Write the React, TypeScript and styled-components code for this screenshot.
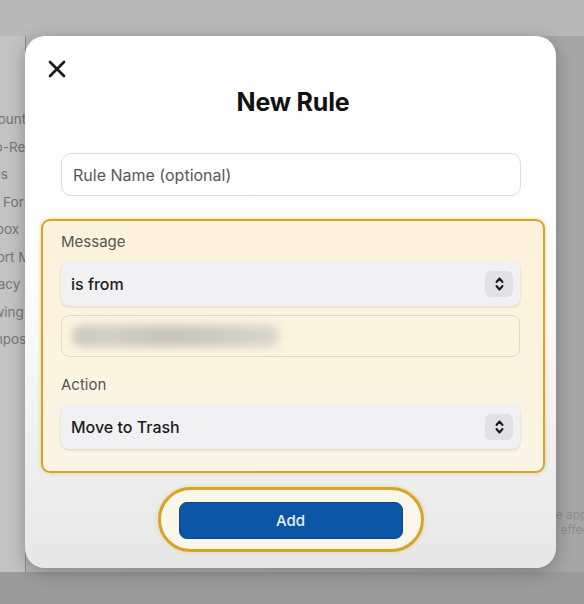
import styled, { createGlobalStyle } from 'styled-components';

const GlobalStyle = createGlobalStyle`
  html, body {
    margin: 0;
    padding: 0;
    width: 584px;
    height: 604px;
    overflow: hidden;
    font-family: Inter, "Noto Sans", "Liberation Sans", sans-serif;
  }
`;

const sidebarItems = ['Accounts', 'Auto-Reply', 'Rules', 'Mail Format', 'Outbox', 'Import Mail', 'Privacy', 'Viewing', 'Composing'];

const Chevrons = () => (
    <svg width="9" height="16" viewBox="0 0 9 16" fill="none">
        <path d="M1.5 6 L4.5 2.5 L7.5 6" stroke="#1a1a1a" strokeWidth="2" strokeLinecap="round" strokeLinejoin="round" />
        <path d="M1.5 10 L4.5 13.5 L7.5 10" stroke="#1a1a1a" strokeWidth="2" strokeLinecap="round" strokeLinejoin="round" />
    </svg>
);

const CloseIcon = () => (
    <svg width="18" height="18" viewBox="0 0 18 18" fill="none">
        <path d="M2 2 L16 16 M16 2 L2 16" stroke="#1c1c1c" strokeWidth="2.8" strokeLinecap="round" />
    </svg>
);

const App = () => {
    return (
        <Page>
            <GlobalStyle />
            <TopBar />
            <Body>
                <Sidebar>
                    <SidebarList>
                        {sidebarItems.map(item => (
                            <SidebarItem key={item}>{item}</SidebarItem>
                        ))}
                    </SidebarList>
                </Sidebar>
                <Main>
                    <Note>Rules will be applied</Note>
                    <Note>and it takes effect</Note>
                </Main>
            </Body>
            <BottomBar />

            <Modal>
                <CloseButton aria-label="Close"><CloseIcon /></CloseButton>
                <Title>New Rule</Title>
                <TextInput placeholder="Rule Name (optional)" />

                <Highlight>
                    <Label>Message</Label>
                    <Select>
                        <SelectText>is from</SelectText>
                        <ChevronBox><Chevrons /></ChevronBox>
                    </Select>
                    <Field>
                        <Blurred />
                    </Field>
                    <Label $spaced>Action</Label>
                    <Select>
                        <SelectText>Move to Trash</SelectText>
                        <ChevronBox><Chevrons /></ChevronBox>
                    </Select>
                </Highlight>

                <ButtonRing>
                    <AddButton>Add</AddButton>
                </ButtonRing>
            </Modal>
        </Page>
    );
};

export default App;

const Page = styled.div`
    position: relative;
    width: 584px;
    height: 604px;
    display: flex;
    flex-direction: column;
    background: #b4b4b4;
    overflow: hidden;
`;

const TopBar = styled.div`
    height: 36px;
    background: #b9b9b9;
`;

const Body = styled.div`
    flex: 1;
    display: flex;
    min-width: 0;
`;

const Sidebar = styled.div`
    flex: 0 0 25px;
    background: #c3c3c3;
    overflow: hidden;
    border-right: 1px solid #8e8e8e;
`;

const SidebarList = styled.div`
    margin-left: -27px;
    padding-top: 74px;
    display: flex;
    flex-direction: column;
`;

const SidebarItem = styled.div`
    height: 27.5px;
    line-height: 18px;
    font-size: 13.5px;
    color: #767676;
    white-space: nowrap;
`;

const Main = styled.div`
    flex: 1;
    min-width: 0;
    overflow: hidden;
    display: flex;
    flex-direction: column;
    justify-content: flex-end;
    padding: 0 0 35px 466px;
    background: linear-gradient(to right, #b8b8b8, #a6a6a6);
`;

const Note = styled.div`
    font-size: 12px;
    line-height: 15px;
    color: #8e8e8e;
    white-space: nowrap;
`;

const BottomBar = styled.div`
    height: 32px;
    background: #9b9b9b;
`;

const Modal = styled.div`
    position: absolute;
    left: 25px;
    top: 36px;
    width: 531px;
    height: 532px;
    box-sizing: border-box;
    padding: 0 11px 0 16px;
    border-radius: 20px;
    background: linear-gradient(to bottom, #ffffff 0%, #fdfdfd 45%, #e7e7e7 100%);
    box-shadow: 0 4px 18px rgba(0, 0, 0, 0.28);
    display: flex;
    flex-direction: column;
`;

const CloseButton = styled.button`
    align-self: flex-start;
    margin: 24px 0 0 7px;
    padding: 0;
    width: 18px;
    height: 18px;
    border: none;
    background: none;
    display: flex;
    cursor: pointer;
`;

const Title = styled.h1`
    margin: 10px 0 0;
    font-size: 25px;
    line-height: 28px;
    font-weight: 700;
    color: #111;
    text-align: center;
    letter-spacing: -0.2px;
`;

const TextInput = styled.input`
    margin: 37px 24px 0 20px;
    height: 43px;
    box-sizing: border-box;
    padding: 0 11px;
    border: 1px solid #dcdcdc;
    border-radius: 10px;
    background: #fff;
    font-family: inherit;
    font-size: 16px;
    color: #222;

    &::placeholder {
        color: #585858;
    }
`;

const Highlight = styled.div`
    margin-top: 23px;
    box-sizing: border-box;
    height: 254px;
    padding: 12px 23px 0 18px;
    border: 2.5px solid #d6a428;
    border-radius: 9px;
    background: linear-gradient(to bottom, #fdf2dc, #fcf5e5);
    box-shadow: 0 0 4px rgba(214, 164, 40, 0.45);
    display: flex;
    flex-direction: column;
`;

const Label = styled.div<{ $spaced?: boolean }>`
    margin-top: ${props => props.$spaced ? '19px' : '0'};
    font-size: 15px;
    line-height: 18px;
    color: #555;
`;

const Select = styled.div`
    margin-top: 11px;
    height: 44px;
    box-sizing: border-box;
    padding: 0 7px 0 10px;
    border-radius: 8px;
    background: #f1f1f3;
    box-shadow: 0 1px 3px rgba(0, 0, 0, 0.14);
    display: flex;
    align-items: center;
    justify-content: space-between;
`;

const SelectText = styled.span`
    font-size: 16px;
    font-weight: 500;
    color: #1c1c1c;
`;

const ChevronBox = styled.span`
    width: 28px;
    height: 26px;
    border-radius: 6px;
    background: #e1e1e4;
    display: flex;
    align-items: center;
    justify-content: center;
`;

const Field = styled.div`
    margin-top: 9px;
    height: 42px;
    box-sizing: border-box;
    padding: 0 10px;
    border: 1px solid #e4dac3;
    border-radius: 8px;
    display: flex;
    align-items: center;
`;

const Blurred = styled.div`
    width: 208px;
    height: 22px;
    border-radius: 11px;
    background: linear-gradient(to right, #cbc6bd, #d3cfc6 15%, #c9c4bb 45%, #cfcac2 70%, #ddd8ce);
    filter: blur(4px);
`;

const ButtonRing = styled.div`
    align-self: center;
    margin: 14px 0 0 -5px;
    padding: 12px 18px 10px;
    border: 3px solid #d6a428;
    border-radius: 34px;
    background: #fbf6ea;
    box-shadow: 0 0 4px rgba(214, 164, 40, 0.4);
`;

const AddButton = styled.button`
    display: block;
    width: 224px;
    height: 37px;
    border: 1px solid #0b4688;
    border-radius: 8px;
    background: #0b57a6;
    color: #e9f0fa;
    font-family: inherit;
    font-size: 15px;
    font-weight: 500;
    cursor: pointer;
`;
